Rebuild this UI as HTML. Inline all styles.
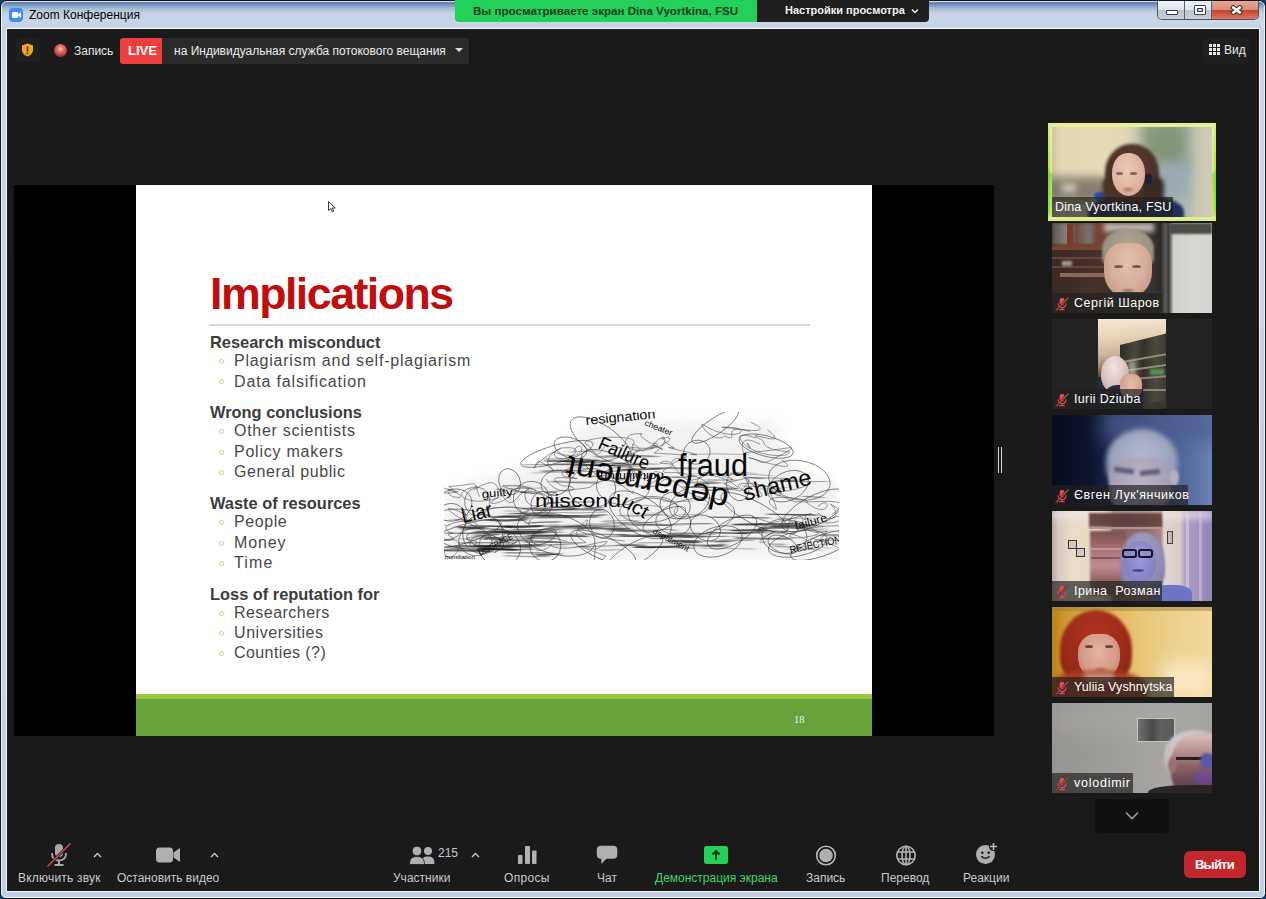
<!DOCTYPE html>
<html><head><meta charset="utf-8">
<style>
*{margin:0;padding:0;box-sizing:border-box}
html,body{width:1266px;height:899px;overflow:hidden;background:#1d3a66;font-family:"Liberation Sans",sans-serif;position:relative}
.a{position:absolute}
.t{position:absolute;white-space:nowrap;line-height:1}
.sl{position:absolute;white-space:nowrap;line-height:1;font-size:16px;color:#484848}
.sh{position:absolute;white-space:nowrap;line-height:1;font-size:16.4px;font-weight:bold;color:#3c3c3c}
.bu{position:absolute;width:5px;height:5px;border:1px solid #c3d48a;border-radius:50%}
.lbl{position:absolute;left:0;bottom:0;height:20px;background:rgba(32,32,32,.68);color:#fff;font-size:12.5px;line-height:20px;white-space:nowrap;padding:0 6px 0 22px}
.mic{position:absolute;left:3px;top:3.5px}
</style></head><body>
<div class="a" style="left:0;top:0;width:1266px;height:899px;border:1px solid #101820;border-radius:7px 7px 6px 6px;background:linear-gradient(180deg,#5a7aaa 0px,#6c8ab6 3px,#a4b8d2 7px,#c4d2e4 12px,#cad6e6 20px,#c6d2e2 28px,#c8d4e4 60px,#c4d0e2 100%)"></div>
<div class="a" style="left:1px;top:1px;width:1264px;height:897px;border:1px solid rgba(255,255,255,.75);border-radius:6px 6px 5px 5px"></div>
<div class="a" style="left:6px;top:28px;width:1px;height:864px;background:#f4f7fb"></div>
<div class="a" style="left:1259px;top:28px;width:1px;height:864px;background:#f4f7fb"></div>
<!-- title -->
<div class="a" style="left:9px;top:8px;width:14px;height:14px;border-radius:4px;background:#3a8ef5"></div>
<div class="a" style="left:12px;top:12px;width:6px;height:6px;background:#fff;border-radius:1px"></div>
<div class="a" style="left:17px;top:12px;width:0;height:0;border-right:4px solid #fff;border-top:3px solid transparent;border-bottom:3px solid transparent"></div>
<div class="t" style="left:29px;top:9px;font-size:12px;color:#000">Zoom Конференция</div>
<!-- window buttons -->
<div class="a" style="left:1157px;top:1px;width:102px;height:19px;border:1px solid #4a5565;border-top:none;border-radius:0 0 5px 5px;overflow:hidden">
 <div class="a" style="left:0;top:0;width:27px;height:18px;background:linear-gradient(180deg,#eef2f6 0,#dfe5ec 50%,#bcc5d0 52%,#c8d0da 100%);border-right:1px solid #5a6470"></div>
 <div class="a" style="left:27px;top:0;width:27px;height:18px;background:linear-gradient(180deg,#eef2f6 0,#dfe5ec 50%,#bcc5d0 52%,#c8d0da 100%);border-right:1px solid #5a6470"></div>
 <div class="a" style="left:54px;top:0;width:47px;height:18px;background:linear-gradient(180deg,#e9a898 0,#dd8b78 48%,#c8452a 52%,#dc7660 100%)"></div>
 <div class="a" style="left:8px;top:9px;width:12px;height:5px;background:#fff;border:1px solid #3a3f46;border-radius:1px"></div>
 <div class="a" style="left:36px;top:4px;width:12px;height:10px;background:#fff;border:1px solid #3a3f46;border-radius:1px"></div>
 <div class="a" style="left:39px;top:7px;width:6px;height:4px;background:#c9d1da;border:1px solid #3a3f46"></div>
 <svg class="a" style="left:72px;top:3.5px" width="13" height="10" viewBox="0 0 13 10"><path d="M3.3 2.6 L9.7 7.4 M9.7 2.6 L3.3 7.4" stroke="#3a3236" stroke-width="4.8" stroke-linecap="square"/><path d="M3.3 2.6 L9.7 7.4 M9.7 2.6 L3.3 7.4" stroke="#fff" stroke-width="2.6" stroke-linecap="square"/></svg>
</div>
<!-- content -->
<div class="a" style="left:7px;top:28px;width:1252px;height:1px;background:#f6f8fb"></div>
<div class="a" style="left:7px;top:29px;width:1252px;height:862px;background:#1a1a1a"></div>
<div class="a" style="left:7px;top:891px;width:1252px;height:1px;background:#f2f5f9"></div>
<!-- green banner -->
<div class="a" style="left:455px;top:0;width:302px;height:22px;background:#22d05a;border-radius:0 0 0 4px"></div>
<div class="t" style="left:473px;top:5px;font-size:11.6px;font-weight:bold;color:#173d22">Вы просматриваете экран Dina Vyortkina, FSU</div>
<div class="a" style="left:757px;top:0;width:172px;height:22px;background:#1e1e1e;border-radius:0 0 4px 0"></div>
<div class="t" style="left:785px;top:5px;font-size:11px;font-weight:bold;color:#f2f2f2">Настройки просмотра</div>
<svg class="a" style="left:911px;top:8px" width="8" height="6" viewBox="0 0 8 6"><path d="M1 1.5 L4 4.5 L7 1.5" stroke="#eee" stroke-width="1.5" fill="none"/></svg>
<!-- top toolbar -->
<div class="a" style="left:16px;top:38px;width:24px;height:24px;background:#1f1f1f;border-radius:4px"></div>
<svg class="a" style="left:21px;top:43px" width="13" height="14" viewBox="0 0 13 14"><path d="M6.5 0.5 L12 2.5 L12 7 C12 10 9.5 12.5 6.5 13.5 C3.5 12.5 1 10 1 7 L1 2.5 Z" fill="#f2a81e"/><rect x="5.7" y="3.5" width="1.6" height="5" fill="#3a2a00"/><rect x="5.7" y="9.6" width="1.6" height="1.6" fill="#3a2a00"/></svg>
<div class="a" style="left:54px;top:44px;width:13px;height:13px;border-radius:50%;background:radial-gradient(circle at 50% 38%,#f6c4bc 0,#e2786c 28%,#c84a40 55%,#8a3430 78%,rgba(40,26,26,.6) 100%)"></div>
<div class="t" style="left:74px;top:45px;font-size:12px;color:#e6e6e6">Запись</div>
<div class="a" style="left:120px;top:38px;width:42px;height:26px;background:#ec4040;border-radius:3px 0 0 3px"></div>
<div class="t" style="left:128px;top:44px;font-size:13px;font-weight:bold;color:#fff">LIVE</div>
<div class="a" style="left:162px;top:38px;width:307px;height:26px;background:#2b2b2b;border-radius:0 3px 3px 0"></div>
<div class="t" style="left:174px;top:45px;font-size:12px;color:#ececec">на Индивидуальная служба потокового вещания</div>
<div class="a" style="left:455px;top:48px;width:0;height:0;border-left:4px solid transparent;border-right:4px solid transparent;border-top:4px solid #ddd"></div>
<!-- view -->
<div class="a" style="left:1203px;top:38px;width:46px;height:26px;background:#1f1f1f;border-radius:5px"></div>
<svg class="a" style="left:1209px;top:44px" width="11" height="11" viewBox="0 0 11 11" fill="#e8e8e8"><rect x="0" y="0" width="3" height="3"/><rect x="4" y="0" width="3" height="3"/><rect x="8" y="0" width="3" height="3"/><rect x="0" y="4" width="3" height="3"/><rect x="4" y="4" width="3" height="3"/><rect x="8" y="4" width="3" height="3"/><rect x="0" y="8" width="3" height="3"/><rect x="4" y="8" width="3" height="3"/><rect x="8" y="8" width="3" height="3"/></svg>
<div class="t" style="left:1224px;top:44px;font-size:12px;color:#eaeaea">Вид</div>
<!-- share area -->
<div class="a" style="left:14px;top:185px;width:980px;height:551px;background:#000"></div>
<div class="a" style="left:136px;top:185px;width:736px;height:551px;background:#fff"></div>
<div class="a" style="left:136px;top:694px;width:736px;height:5px;background:#9ac83c"></div>
<div class="a" style="left:136px;top:699px;width:736px;height:37px;background:#67a33a"></div>
<div class="t" style="left:794px;top:714.5px;font-size:10.5px;color:#f0f5e8;font-family:'Liberation Serif',serif">18</div>
<div class="a" style="left:209px;top:324px;width:601px;height:2px;background:#d6d6d6"></div>
<div class="t" style="left:210px;top:272px;font-size:44.7px;font-weight:bold;color:#c00d0d;letter-spacing:-1.5px">Implications</div>
<div class="sh" style="left:210px;top:333.8px">Research misconduct</div>
<div class="sl" style="left:234px;top:353px;letter-spacing:0.79px">Plagiarism and self-plagiarism</div>
<div class="sl" style="left:234px;top:373.8px;letter-spacing:0.85px">Data falsification</div>
<div class="sh" style="left:210px;top:403.9px">Wrong conclusions</div>
<div class="sl" style="left:234px;top:423.1px;letter-spacing:0.71px">Other scientists</div>
<div class="sl" style="left:234px;top:443.5px;letter-spacing:0.77px">Policy makers</div>
<div class="sl" style="left:234px;top:464.2px;letter-spacing:0.60px">General public</div>
<div class="sh" style="left:210px;top:495px">Waste of resources</div>
<div class="sl" style="left:234px;top:514px;letter-spacing:0.57px">People</div>
<div class="sl" style="left:234px;top:534.7px;letter-spacing:0.90px">Money</div>
<div class="sl" style="left:234px;top:555.3px;letter-spacing:1.12px">Time</div>
<div class="sh" style="left:210px;top:585.9px">Loss of reputation for</div>
<div class="sl" style="left:234px;top:604.9px;letter-spacing:0.46px">Researchers</div>
<div class="sl" style="left:234px;top:625.2px;letter-spacing:0.58px">Universities</div>
<div class="sl" style="left:234px;top:645.4px;letter-spacing:0.42px">Counties (?)</div>
<div class="bu" style="left:219px;top:358.5px"></div>
<div class="bu" style="left:219px;top:379.3px"></div>
<div class="bu" style="left:219px;top:429.1px"></div>
<div class="bu" style="left:219px;top:449.5px"></div>
<div class="bu" style="left:219px;top:470.2px"></div>
<div class="bu" style="left:219px;top:520px"></div>
<div class="bu" style="left:219px;top:540.7px"></div>
<div class="bu" style="left:219px;top:561.3px"></div>
<div class="bu" style="left:219px;top:610.9px"></div>
<div class="bu" style="left:219px;top:631.2px"></div>
<div class="bu" style="left:219px;top:651.4px"></div>
<!-- cursor -->
<svg class="a" style="left:328px;top:201px" width="8" height="12" viewBox="0 0 8 12"><path d="M0.5 0.5 L0.5 9.5 L2.8 7.5 L4.3 11 L5.6 10.4 L4.2 7 L7.2 7 Z" fill="#fff" stroke="#222" stroke-width="0.9"/></svg>
<!-- divider handle -->
<div class="a" style="left:998px;top:447px;width:1px;height:26px;background:#d4d4d4"></div>
<div class="a" style="left:1001px;top:447px;width:1px;height:26px;background:#d4d4d4"></div>
<svg class="a" style="left:444px;top:412px" width="395" height="148" viewBox="0 0 395 148">
<defs><filter id="bl" x="-10%" y="-50%" width="120%" height="200%"><feGaussianBlur stdDeviation="2.5 0.7"/></filter><filter id="bl2" x="-10%" y="-10%" width="120%" height="120%"><feGaussianBlur stdDeviation="5"/></filter></defs>
<path d="M0 148 L0 78 L26 70 L76 58 L106 46 L126 26 L146 10 L330 9 L345 41 L356 58 L386 68 L395 72 L395 148 Z" fill="#e2e2e2" filter="url(#bl2)" opacity=".45"/>
<g fill="none" stroke="#1a1a1a" stroke-linecap="round" filter="url(#bl)"><path d="M61.7 121.6 q19.0 0.3 37.9 -1.0" stroke-width="1.9" stroke-opacity="0.71"/><path d="M46.2 105.1 q19.8 -1.1 39.7 0.6" stroke-width="1.2" stroke-opacity="0.55"/><path d="M68.8 117.4 q23.6 1.3 47.2 0.4" stroke-width="1.9" stroke-opacity="0.40"/><path d="M50.6 120.4 q13.0 -0.5 26.0 1.3" stroke-width="1.5" stroke-opacity="0.65"/><path d="M30.3 123.1 q10.3 1.2 20.6 0.1" stroke-width="2.2" stroke-opacity="0.37"/><path d="M14.4 115.1 q13.4 1.0 26.9 0.3" stroke-width="2.1" stroke-opacity="0.80"/><path d="M82.2 125.8 q14.0 0.2 28.0 1.0" stroke-width="2.0" stroke-opacity="0.42"/><path d="M64.2 124.9 q9.2 1.5 18.4 1.3" stroke-width="0.7" stroke-opacity="0.39"/><path d="M24.8 113.7 q22.6 0.3 45.2 0.9" stroke-width="1.8" stroke-opacity="0.49"/><path d="M59.9 118.4 q18.0 0.2 36.1 -1.0" stroke-width="0.8" stroke-opacity="0.49"/><path d="M18.8 117.4 q20.3 -1.4 40.6 0.5" stroke-width="1.1" stroke-opacity="0.62"/><path d="M81.0 130.0 q21.0 0.4 42.0 0.6" stroke-width="1.4" stroke-opacity="0.51"/><path d="M43.8 108.0 q18.4 1.1 36.9 -0.3" stroke-width="2.2" stroke-opacity="0.72"/><path d="M0.2 121.1 q27.9 -0.2 55.7 1.2" stroke-width="1.4" stroke-opacity="0.56"/><path d="M32.3 119.8 q23.8 0.3 47.7 0.8" stroke-width="2.0" stroke-opacity="0.67"/><path d="M38.7 125.6 q9.1 0.0 18.1 -0.3" stroke-width="0.8" stroke-opacity="0.52"/><path d="M80.1 121.0 q19.3 -0.3 38.7 -0.8" stroke-width="1.0" stroke-opacity="0.45"/><path d="M84.8 123.5 q29.2 -0.2 58.5 0.9" stroke-width="1.7" stroke-opacity="0.73"/><path d="M47.6 127.8 q20.3 0.9 40.5 -1.1" stroke-width="2.0" stroke-opacity="0.35"/><path d="M-12.0 114.6 q7.5 -0.5 15.0 -1.3" stroke-width="1.0" stroke-opacity="0.45"/><path d="M82.8 111.2 q16.4 -1.4 32.9 -1.4" stroke-width="1.2" stroke-opacity="0.59"/><path d="M59.9 114.9 q18.7 -0.1 37.4 -0.9" stroke-width="2.1" stroke-opacity="0.79"/><path d="M15.2 131.0 q27.7 -0.4 55.4 -0.1" stroke-width="0.9" stroke-opacity="0.72"/><path d="M56.3 128.9 q29.9 -0.9 59.8 1.1" stroke-width="0.9" stroke-opacity="0.62"/><path d="M48.3 118.9 q23.8 1.1 47.7 0.6" stroke-width="1.1" stroke-opacity="0.75"/><path d="M59.0 124.9 q28.6 -0.8 57.2 -0.6" stroke-width="1.3" stroke-opacity="0.34"/><path d="M44.0 114.2 q11.6 0.9 23.1 -0.4" stroke-width="1.0" stroke-opacity="0.63"/><path d="M9.8 107.4 q20.8 1.3 41.5 0.5" stroke-width="1.0" stroke-opacity="0.45"/><path d="M44.0 126.5 q9.5 0.1 19.0 0.1" stroke-width="2.2" stroke-opacity="0.52"/><path d="M81.2 120.3 q13.9 -1.2 27.8 -0.6" stroke-width="1.0" stroke-opacity="0.70"/><path d="M136.9 47.5 q13.8 1.2 27.6 1.5" stroke-width="1.5" stroke-opacity="0.39"/><path d="M151.7 53.4 q24.4 -0.0 48.8 -1.0" stroke-width="1.2" stroke-opacity="0.76"/><path d="M102.0 49.0 q15.6 0.1 31.2 0.0" stroke-width="1.7" stroke-opacity="0.69"/><path d="M151.3 44.5 q19.2 0.8 38.4 -1.0" stroke-width="2.1" stroke-opacity="0.39"/><path d="M118.9 49.2 q17.4 0.9 34.8 -0.8" stroke-width="1.8" stroke-opacity="0.69"/><path d="M112.5 52.3 q20.6 0.3 41.1 0.6" stroke-width="1.4" stroke-opacity="0.32"/><path d="M134.0 52.9 q18.7 -0.7 37.3 0.9" stroke-width="1.3" stroke-opacity="0.52"/><path d="M176.7 57.8 q20.3 -0.8 40.6 -1.1" stroke-width="1.5" stroke-opacity="0.70"/><path d="M132.8 53.6 q14.6 -0.7 29.1 0.3" stroke-width="1.6" stroke-opacity="0.56"/><path d="M176.4 57.9 q11.4 0.6 22.7 1.0" stroke-width="1.0" stroke-opacity="0.38"/><path d="M135.2 49.9 q16.7 1.4 33.5 -1.4" stroke-width="1.2" stroke-opacity="0.41"/><path d="M79.8 52.7 q29.7 0.7 59.4 -1.4" stroke-width="0.8" stroke-opacity="0.53"/><path d="M142.3 64.6 q10.7 -0.2 21.4 -1.3" stroke-width="1.2" stroke-opacity="0.45"/><path d="M203.5 56.3 q24.7 -0.7 49.3 0.2" stroke-width="1.8" stroke-opacity="0.41"/><path d="M122.9 58.7 q28.5 1.4 57.0 0.3" stroke-width="1.2" stroke-opacity="0.47"/><path d="M151.5 53.5 q22.1 0.6 44.2 1.1" stroke-width="0.7" stroke-opacity="0.47"/><path d="M97.8 59.2 q16.1 -0.5 32.2 -0.9" stroke-width="1.9" stroke-opacity="0.41"/><path d="M124.2 50.9 q12.1 -0.6 24.2 -0.2" stroke-width="0.9" stroke-opacity="0.53"/><path d="M159.2 51.6 q26.9 -1.3 53.8 0.6" stroke-width="0.9" stroke-opacity="0.49"/><path d="M129.6 55.6 q7.9 -0.3 15.8 1.3" stroke-width="0.9" stroke-opacity="0.43"/><path d="M217.2 124.3 q15.6 -0.4 31.2 0.8" stroke-width="0.8" stroke-opacity="0.77"/><path d="M216.8 117.7 q8.0 -1.3 15.9 1.1" stroke-width="1.1" stroke-opacity="0.49"/><path d="M188.0 135.3 q19.2 -0.8 38.4 -1.4" stroke-width="0.7" stroke-opacity="0.50"/><path d="M264.7 133.2 q8.2 0.1 16.4 -1.1" stroke-width="1.1" stroke-opacity="0.51"/><path d="M207.4 124.4 q23.8 -0.9 47.6 -0.7" stroke-width="1.7" stroke-opacity="0.37"/><path d="M213.9 123.2 q16.2 -0.6 32.4 -0.5" stroke-width="2.0" stroke-opacity="0.41"/><path d="M234.5 129.4 q8.1 0.9 16.1 1.4" stroke-width="1.6" stroke-opacity="0.58"/><path d="M193.2 134.8 q28.2 0.5 56.4 1.4" stroke-width="0.9" stroke-opacity="0.64"/><path d="M239.1 125.4 q21.7 -0.3 43.5 -1.3" stroke-width="0.7" stroke-opacity="0.51"/><path d="M193.5 130.9 q18.7 -0.3 37.4 -0.1" stroke-width="1.0" stroke-opacity="0.38"/><path d="M258.2 134.2 q12.9 -0.2 25.8 -1.0" stroke-width="0.7" stroke-opacity="0.47"/><path d="M163.4 124.3 q19.9 -0.3 39.9 -0.4" stroke-width="1.7" stroke-opacity="0.31"/><path d="M270.7 129.9 q8.7 -0.1 17.5 -0.5" stroke-width="1.4" stroke-opacity="0.59"/><path d="M224.5 129.0 q15.3 -0.7 30.6 0.5" stroke-width="2.0" stroke-opacity="0.58"/><path d="M237.2 133.0 q21.3 0.2 42.7 1.3" stroke-width="2.1" stroke-opacity="0.48"/><path d="M226.5 121.3 q21.5 -0.7 42.9 1.0" stroke-width="1.3" stroke-opacity="0.51"/><path d="M242.0 124.8 q28.0 0.0 55.9 -0.6" stroke-width="0.7" stroke-opacity="0.37"/><path d="M155.4 138.1 q10.9 0.5 21.7 -0.8" stroke-width="0.9" stroke-opacity="0.41"/><path d="M276.3 128.0 q16.4 0.5 32.7 0.1" stroke-width="1.0" stroke-opacity="0.55"/><path d="M175.6 123.7 q26.2 -0.5 52.4 1.2" stroke-width="2.2" stroke-opacity="0.47"/><path d="M191.0 135.0 q23.1 1.0 46.3 -1.0" stroke-width="1.7" stroke-opacity="0.78"/><path d="M184.6 124.1 q20.2 0.7 40.4 0.1" stroke-width="1.2" stroke-opacity="0.44"/><path d="M227.8 131.6 q14.8 -1.1 29.6 -1.3" stroke-width="0.9" stroke-opacity="0.56"/><path d="M234.4 128.9 q23.4 0.8 46.7 -0.1" stroke-width="0.8" stroke-opacity="0.53"/><path d="M256.9 136.2 q27.1 0.0 54.1 0.9" stroke-width="0.7" stroke-opacity="0.43"/><path d="M174.9 132.8 q13.2 -0.5 26.3 0.8" stroke-width="1.7" stroke-opacity="0.46"/><path d="M263.1 120.5 q20.3 0.4 40.5 1.0" stroke-width="1.3" stroke-opacity="0.65"/><path d="M230.9 125.6 q16.0 -0.9 32.0 -1.5" stroke-width="1.7" stroke-opacity="0.42"/><path d="M124.8 122.2 q29.3 -0.2 58.7 0.4" stroke-width="0.8" stroke-opacity="0.64"/><path d="M132.4 134.8 q29.7 -1.1 59.5 -1.4" stroke-width="0.7" stroke-opacity="0.66"/><path d="M290.3 121.5 q29.9 -1.4 59.7 0.1" stroke-width="0.8" stroke-opacity="0.47"/><path d="M289.6 112.6 q14.5 -0.6 28.9 -0.3" stroke-width="1.9" stroke-opacity="0.72"/><path d="M266.5 105.1 q29.6 0.1 59.1 0.9" stroke-width="1.2" stroke-opacity="0.65"/><path d="M330.2 115.0 q9.9 -0.0 19.8 -1.1" stroke-width="2.1" stroke-opacity="0.43"/><path d="M307.4 113.1 q20.2 -0.7 40.5 -0.8" stroke-width="0.8" stroke-opacity="0.61"/><path d="M291.1 112.6 q13.3 1.2 26.7 -0.6" stroke-width="0.7" stroke-opacity="0.33"/><path d="M326.7 113.8 q18.4 1.1 36.8 -0.0" stroke-width="2.2" stroke-opacity="0.40"/><path d="M271.5 117.6 q16.4 0.5 32.8 0.4" stroke-width="0.7" stroke-opacity="0.58"/><path d="M292.2 126.0 q27.0 1.0 53.9 0.7" stroke-width="2.2" stroke-opacity="0.52"/><path d="M321.5 113.2 q11.3 -0.4 22.6 0.8" stroke-width="0.8" stroke-opacity="0.34"/><path d="M310.3 118.7 q7.7 -1.5 15.5 0.1" stroke-width="0.9" stroke-opacity="0.78"/><path d="M323.6 102.1 q24.0 1.0 48.1 0.8" stroke-width="1.2" stroke-opacity="0.70"/><path d="M313.5 111.8 q28.9 -0.7 57.8 1.2" stroke-width="1.2" stroke-opacity="0.65"/><path d="M352.4 113.2 q12.6 0.5 25.2 0.9" stroke-width="1.2" stroke-opacity="0.48"/><path d="M289.1 118.4 q15.5 -0.5 30.9 -1.2" stroke-width="1.0" stroke-opacity="0.75"/><path d="M295.2 120.5 q12.3 0.5 24.5 -1.0" stroke-width="1.8" stroke-opacity="0.57"/><path d="M326.4 114.1 q15.4 0.0 30.8 -0.3" stroke-width="1.3" stroke-opacity="0.30"/><path d="M286.5 118.7 q28.9 -0.5 57.9 0.8" stroke-width="0.9" stroke-opacity="0.74"/><path d="M374.9 123.2 q17.2 -0.3 34.4 0.6" stroke-width="2.1" stroke-opacity="0.41"/><path d="M316.7 116.3 q22.7 -0.9 45.5 -0.4" stroke-width="2.1" stroke-opacity="0.46"/><path d="M31.8 137.9 q21.8 -0.9 43.6 0.3" stroke-width="1.2" stroke-opacity="0.62"/><path d="M54.3 133.4 q21.6 -1.2 43.3 1.0" stroke-width="1.4" stroke-opacity="0.58"/><path d="M7.8 134.3 q22.5 -0.8 44.9 0.3" stroke-width="1.3" stroke-opacity="0.49"/><path d="M5.9 136.1 q8.2 0.3 16.4 0.3" stroke-width="1.6" stroke-opacity="0.52"/><path d="M34.5 137.1 q18.0 -0.6 36.1 0.7" stroke-width="2.2" stroke-opacity="0.67"/><path d="M37.3 137.8 q27.0 -0.0 54.0 -0.8" stroke-width="0.8" stroke-opacity="0.80"/><path d="M30.1 133.6 q28.6 0.0 57.2 1.5" stroke-width="1.9" stroke-opacity="0.70"/><path d="M61.0 140.9 q23.5 -0.1 47.0 0.1" stroke-width="1.0" stroke-opacity="0.70"/><path d="M36.7 136.2 q13.8 0.2 27.6 0.9" stroke-width="1.6" stroke-opacity="0.34"/><path d="M-3.3 138.2 q25.5 0.1 51.0 1.2" stroke-width="2.0" stroke-opacity="0.69"/><path d="M28.3 136.0 q15.7 -0.5 31.5 1.1" stroke-width="0.8" stroke-opacity="0.32"/><path d="M34.4 136.4 q11.6 0.4 23.2 1.2" stroke-width="1.2" stroke-opacity="0.72"/><path d="M92.0 142.7 q12.2 0.7 24.3 -0.9" stroke-width="1.6" stroke-opacity="0.74"/><path d="M19.7 134.7 q7.8 0.4 15.7 -0.7" stroke-width="1.1" stroke-opacity="0.46"/><path d="M-1.1 134.7 q11.6 -0.1 23.1 -1.1" stroke-width="0.8" stroke-opacity="0.65"/><path d="M61.4 143.7 q21.2 1.5 42.5 0.6" stroke-width="1.2" stroke-opacity="0.40"/><path d="M23.6 134.6 q14.5 0.4 29.0 -0.2" stroke-width="1.3" stroke-opacity="0.37"/><path d="M32.7 134.7 q17.8 -0.5 35.6 0.6" stroke-width="1.4" stroke-opacity="0.77"/><path d="M164.1 118.3 q13.9 1.1 27.8 0.5" stroke-width="2.0" stroke-opacity="0.44"/><path d="M105.1 115.1 q16.2 -0.2 32.4 -1.3" stroke-width="1.8" stroke-opacity="0.60"/><path d="M140.5 113.9 q17.4 0.6 34.8 0.5" stroke-width="2.1" stroke-opacity="0.45"/><path d="M165.3 116.9 q10.5 -0.2 20.9 -0.5" stroke-width="2.0" stroke-opacity="0.43"/><path d="M174.3 103.5 q20.8 1.2 41.6 -1.2" stroke-width="1.5" stroke-opacity="0.35"/><path d="M136.0 115.5 q23.8 1.2 47.5 1.3" stroke-width="1.7" stroke-opacity="0.47"/><path d="M190.6 113.0 q18.1 -0.6 36.1 0.5" stroke-width="1.2" stroke-opacity="0.53"/><path d="M95.3 104.2 q29.5 1.0 58.9 0.4" stroke-width="2.2" stroke-opacity="0.50"/><path d="M140.7 96.1 q9.0 0.5 18.0 -0.8" stroke-width="1.3" stroke-opacity="0.50"/><path d="M175.6 111.8 q15.8 0.7 31.6 -1.2" stroke-width="0.8" stroke-opacity="0.50"/><path d="M170.8 118.0 q21.5 0.9 43.0 0.7" stroke-width="1.8" stroke-opacity="0.43"/><path d="M158.9 109.6 q18.0 1.3 36.1 1.2" stroke-width="0.6" stroke-opacity="0.73"/><path d="M177.5 112.7 q19.6 0.9 39.1 -0.6" stroke-width="1.5" stroke-opacity="0.36"/><path d="M142.4 111.9 q20.3 0.0 40.6 -0.6" stroke-width="0.8" stroke-opacity="0.34"/><path d="M161.3 108.4 q16.8 -0.1 33.6 0.2" stroke-width="0.7" stroke-opacity="0.41"/><path d="M119.9 114.4 q9.8 1.4 19.7 0.1" stroke-width="2.0" stroke-opacity="0.38"/><path d="M55.6 104.6 q26.9 -1.5 53.9 -1.0" stroke-width="2.1" stroke-opacity="0.51"/><path d="M102.8 91.1 q23.5 -1.4 47.1 -1.2" stroke-width="0.9" stroke-opacity="0.57"/><path d="M68.4 114.8 q22.0 -0.3 43.9 -1.3" stroke-width="2.0" stroke-opacity="0.32"/><path d="M81.0 102.9 q28.2 0.5 56.3 1.2" stroke-width="1.1" stroke-opacity="0.54"/><path d="M120.6 97.4 q18.8 -0.6 37.5 0.7" stroke-width="2.0" stroke-opacity="0.50"/><path d="M91.6 105.7 q17.2 -0.2 34.3 -0.1" stroke-width="1.4" stroke-opacity="0.48"/><path d="M144.5 103.5 q8.9 -0.3 17.8 -0.8" stroke-width="1.4" stroke-opacity="0.57"/><path d="M114.2 103.4 q14.6 0.7 29.1 -0.0" stroke-width="1.4" stroke-opacity="0.42"/><path d="M105.2 100.3 q29.2 1.4 58.5 -0.4" stroke-width="0.6" stroke-opacity="0.60"/><path d="M76.9 96.7 q14.3 -0.6 28.6 -0.0" stroke-width="1.6" stroke-opacity="0.59"/><path d="M61.3 99.0 q8.7 -0.7 17.4 0.9" stroke-width="0.7" stroke-opacity="0.43"/><path d="M51.0 105.4 q16.6 -1.2 33.1 1.5" stroke-width="1.1" stroke-opacity="0.64"/><path d="M105.9 95.3 q14.6 0.4 29.3 -1.3" stroke-width="1.9" stroke-opacity="0.69"/><path d="M89.1 98.1 q21.6 0.4 43.1 -1.4" stroke-width="1.5" stroke-opacity="0.76"/><path d="M306.2 66.0 q20.5 -0.2 41.1 0.5" stroke-width="0.6" stroke-opacity="0.67"/><path d="M334.0 68.6 q9.2 0.8 18.4 -0.4" stroke-width="1.9" stroke-opacity="0.52"/><path d="M255.5 72.1 q10.2 -1.3 20.3 -1.2" stroke-width="1.1" stroke-opacity="0.67"/><path d="M288.1 62.3 q19.8 -0.6 39.7 1.4" stroke-width="0.8" stroke-opacity="0.36"/><path d="M227.3 65.0 q12.3 1.0 24.5 -1.1" stroke-width="1.3" stroke-opacity="0.57"/><path d="M300.8 65.2 q8.2 0.5 16.4 1.3" stroke-width="1.3" stroke-opacity="0.49"/><path d="M237.1 70.4 q16.2 0.7 32.5 -1.0" stroke-width="1.8" stroke-opacity="0.35"/><path d="M260.9 67.9 q15.3 0.3 30.6 0.1" stroke-width="0.9" stroke-opacity="0.47"/><path d="M239.6 75.1 q26.5 -0.1 52.9 1.4" stroke-width="1.2" stroke-opacity="0.59"/><path d="M259.8 78.2 q12.8 0.2 25.5 -0.7" stroke-width="1.0" stroke-opacity="0.67"/><path d="M15.0 126.8 q16.0 0.6 32.0 -0.2" stroke-width="1.1" stroke-opacity="0.37"/><path d="M370.5 132.4 q17.8 -0.0 35.5 -0.8" stroke-width="1.2" stroke-opacity="0.23"/><path d="M109.6 122.3 q8.3 0.6 16.6 0.2" stroke-width="1.0" stroke-opacity="0.30"/><path d="M49.1 134.4 q24.7 0.9 49.4 -1.2" stroke-width="1.2" stroke-opacity="0.27"/><path d="M67.7 101.4 q21.2 -1.1 42.4 0.8" stroke-width="1.0" stroke-opacity="0.47"/><path d="M350.3 116.5 q15.7 1.4 31.4 0.7" stroke-width="0.8" stroke-opacity="0.46"/><path d="M273.5 62.3 q13.1 -1.4 26.2 0.1" stroke-width="0.7" stroke-opacity="0.29"/><path d="M88.6 61.0 q18.4 -0.7 36.8 -0.6" stroke-width="0.7" stroke-opacity="0.35"/><path d="M330.8 69.1 q26.8 1.1 53.7 0.3" stroke-width="1.0" stroke-opacity="0.42"/><path d="M198.5 103.0 q28.2 0.8 56.4 -0.7" stroke-width="0.5" stroke-opacity="0.48"/><path d="M131.4 116.1 q12.8 -0.1 25.5 -0.4" stroke-width="1.2" stroke-opacity="0.48"/><path d="M187.2 93.3 q15.3 -0.8 30.7 1.3" stroke-width="0.6" stroke-opacity="0.48"/><path d="M246.3 42.4 q27.8 -1.2 55.6 0.2" stroke-width="0.6" stroke-opacity="0.50"/><path d="M110.6 124.8 q8.9 0.5 17.8 -1.3" stroke-width="0.5" stroke-opacity="0.37"/><path d="M373.3 118.9 q26.7 0.9 53.5 0.1" stroke-width="0.6" stroke-opacity="0.36"/><path d="M62.0 101.8 q15.5 -0.0 30.9 -0.9" stroke-width="1.1" stroke-opacity="0.33"/><path d="M179.5 43.1 q18.5 0.2 36.9 1.4" stroke-width="1.0" stroke-opacity="0.24"/><path d="M107.1 69.6 q23.3 1.3 46.6 1.4" stroke-width="1.4" stroke-opacity="0.48"/><path d="M324.9 132.1 q8.0 -0.0 15.9 0.3" stroke-width="1.1" stroke-opacity="0.38"/><path d="M229.1 131.1 q9.4 0.1 18.9 1.4" stroke-width="0.5" stroke-opacity="0.23"/><path d="M328.9 134.4 q8.0 -1.4 16.1 1.0" stroke-width="1.1" stroke-opacity="0.36"/><path d="M216.2 113.0 q25.7 -1.5 51.4 -1.3" stroke-width="1.2" stroke-opacity="0.49"/><path d="M315.0 77.0 q15.0 -0.5 30.1 -1.5" stroke-width="1.2" stroke-opacity="0.28"/><path d="M218.4 89.2 q15.0 0.5 30.1 -0.1" stroke-width="0.7" stroke-opacity="0.46"/><path d="M58.5 74.2 q13.2 -0.1 26.4 0.9" stroke-width="0.8" stroke-opacity="0.27"/><path d="M245.2 61.8 q19.3 -0.7 38.5 1.1" stroke-width="0.7" stroke-opacity="0.27"/><path d="M107.6 68.9 q23.8 0.5 47.7 0.9" stroke-width="1.0" stroke-opacity="0.22"/><path d="M287.8 60.2 q12.4 -0.3 24.8 1.5" stroke-width="0.8" stroke-opacity="0.31"/><path d="M345.3 137.3 q16.2 -1.1 32.4 0.9" stroke-width="1.2" stroke-opacity="0.30"/><path d="M298.3 74.1 q14.0 0.3 27.9 0.7" stroke-width="0.9" stroke-opacity="0.45"/><path d="M-4.6 108.6 q16.1 -1.3 32.1 1.2" stroke-width="0.6" stroke-opacity="0.26"/><path d="M332.5 134.9 q28.5 -0.5 56.9 1.3" stroke-width="0.6" stroke-opacity="0.41"/><path d="M358.8 84.4 q10.6 0.5 21.1 1.1" stroke-width="1.2" stroke-opacity="0.48"/><path d="M167.0 73.3 q10.2 -0.7 20.4 1.3" stroke-width="0.6" stroke-opacity="0.26"/><path d="M125.5 40.1 q14.4 -1.0 28.8 -1.1" stroke-width="1.0" stroke-opacity="0.36"/><path d="M211.4 113.5 q19.4 1.3 38.7 -1.3" stroke-width="0.7" stroke-opacity="0.22"/><path d="M110.7 113.3 q28.3 0.0 56.6 -1.0" stroke-width="0.8" stroke-opacity="0.37"/><path d="M104.8 116.7 q29.4 -0.1 58.8 0.3" stroke-width="1.3" stroke-opacity="0.34"/><path d="M64.4 133.7 q29.5 -1.4 59.0 0.8" stroke-width="0.9" stroke-opacity="0.22"/><path d="M53.5 77.3 q24.1 -0.9 48.1 -1.4" stroke-width="0.7" stroke-opacity="0.44"/><path d="M184.7 102.2 q18.0 -1.0 35.9 -1.5" stroke-width="0.8" stroke-opacity="0.21"/><path d="M91.6 103.1 q15.8 -0.1 31.6 0.4" stroke-width="0.8" stroke-opacity="0.31"/><path d="M334.7 106.2 q16.9 0.1 33.8 -0.1" stroke-width="0.8" stroke-opacity="0.47"/><path d="M81.0 132.6 q26.7 1.1 53.4 -1.0" stroke-width="1.0" stroke-opacity="0.50"/><path d="M102.6 53.0 q23.8 -0.8 47.6 0.3" stroke-width="0.6" stroke-opacity="0.48"/><path d="M100.8 47.0 q23.0 -0.5 45.9 0.2" stroke-width="0.9" stroke-opacity="0.48"/><path d="M190.5 74.0 q7.5 -0.0 15.1 -0.7" stroke-width="1.0" stroke-opacity="0.39"/><path d="M170.3 44.3 q18.7 -0.1 37.4 0.4" stroke-width="1.4" stroke-opacity="0.28"/><path d="M162.7 43.7 q25.5 -0.8 51.0 1.0" stroke-width="1.2" stroke-opacity="0.28"/><path d="M342.1 102.3 q17.1 0.2 34.2 1.3" stroke-width="0.9" stroke-opacity="0.34"/></g>
<g fill="none" stroke="#333" stroke-width="0.65" stroke-opacity="0.85"><ellipse cx="179.2" cy="73.8" rx="26.8" ry="18.9" transform="rotate(1 179.2 73.8)"/><ellipse cx="231.1" cy="93.5" rx="15.5" ry="13.2" transform="rotate(21 231.1 93.5)"/><ellipse cx="41.2" cy="128.9" rx="19.1" ry="7.3" transform="rotate(14 41.2 128.9)"/><ellipse cx="21.1" cy="117.2" rx="39.5" ry="19.5" transform="rotate(8 21.1 117.2)"/><ellipse cx="65.6" cy="69.7" rx="10.5" ry="13.4" transform="rotate(-22 65.6 69.7)"/><ellipse cx="98.1" cy="91.6" rx="10.9" ry="12.5" transform="rotate(24 98.1 91.6)"/><ellipse cx="204.9" cy="97.6" rx="29.2" ry="13.0" transform="rotate(-3 204.9 97.6)"/><ellipse cx="112.1" cy="122.3" rx="39.9" ry="19.9" transform="rotate(15 112.1 122.3)"/><ellipse cx="126.4" cy="35.8" rx="16.9" ry="10.0" transform="rotate(19 126.4 35.8)"/><ellipse cx="159.2" cy="135.8" rx="35.4" ry="11.4" transform="rotate(24 159.2 135.8)"/><ellipse cx="5.2" cy="109.5" rx="16.3" ry="18.7" transform="rotate(34 5.2 109.5)"/><ellipse cx="158.0" cy="111.8" rx="12.2" ry="14.8" transform="rotate(-16 158.0 111.8)"/><ellipse cx="38.6" cy="121.9" rx="20.0" ry="19.5" transform="rotate(-27 38.6 121.9)"/><ellipse cx="99.9" cy="124.4" rx="13.0" ry="6.8" transform="rotate(-23 99.9 124.4)"/><ellipse cx="220.3" cy="107.3" rx="23.4" ry="8.7" transform="rotate(-26 220.3 107.3)"/><ellipse cx="252.8" cy="40.2" rx="13.5" ry="11.9" transform="rotate(-16 252.8 40.2)"/><ellipse cx="378.8" cy="133.3" rx="34.1" ry="10.3" transform="rotate(-20 378.8 133.3)"/><ellipse cx="156.8" cy="28.3" rx="35.6" ry="15.0" transform="rotate(34 156.8 28.3)"/><ellipse cx="87.1" cy="86.3" rx="17.7" ry="16.8" transform="rotate(-14 87.1 86.3)"/><ellipse cx="33.3" cy="89.6" rx="12.7" ry="14.2" transform="rotate(7 33.3 89.6)"/><ellipse cx="148.1" cy="76.0" rx="23.6" ry="19.4" transform="rotate(5 148.1 76.0)"/><ellipse cx="338.6" cy="132.6" rx="15.5" ry="8.2" transform="rotate(22 338.6 132.6)"/><ellipse cx="101.1" cy="133.2" rx="15.7" ry="16.4" transform="rotate(-21 101.1 133.2)"/><ellipse cx="370.8" cy="98.3" rx="36.5" ry="14.4" transform="rotate(-28 370.8 98.3)"/><ellipse cx="19.9" cy="122.0" rx="38.9" ry="9.3" transform="rotate(-17 19.9 122.0)"/><ellipse cx="322.1" cy="34.1" rx="27.9" ry="10.1" transform="rotate(15 322.1 34.1)"/><ellipse cx="31.5" cy="130.0" rx="16.9" ry="13.8" transform="rotate(8 31.5 130.0)"/><ellipse cx="112.9" cy="41.9" rx="37.5" ry="8.9" transform="rotate(-16 112.9 41.9)"/><ellipse cx="176.6" cy="59.4" rx="11.8" ry="8.5" transform="rotate(5 176.6 59.4)"/><ellipse cx="55.7" cy="135.6" rx="20.9" ry="18.5" transform="rotate(11 55.7 135.6)"/><ellipse cx="271.1" cy="14.4" rx="27.5" ry="8.0" transform="rotate(-34 271.1 14.4)"/><ellipse cx="355.4" cy="68.2" rx="31.0" ry="19.5" transform="rotate(10 355.4 68.2)"/><ellipse cx="190.7" cy="141.6" rx="31.9" ry="10.5" transform="rotate(-30 190.7 141.6)"/><ellipse cx="215.2" cy="105.7" rx="32.1" ry="18.6" transform="rotate(14 215.2 105.7)"/><ellipse cx="310.4" cy="100.6" rx="37.5" ry="10.9" transform="rotate(28 310.4 100.6)"/><ellipse cx="340.4" cy="124.2" rx="22.5" ry="17.1" transform="rotate(5 340.4 124.2)"/><ellipse cx="245.6" cy="90.7" rx="21.5" ry="14.2" transform="rotate(-29 245.6 90.7)"/><ellipse cx="251.2" cy="104.7" rx="39.8" ry="18.3" transform="rotate(-8 251.2 104.7)"/><ellipse cx="288.0" cy="120.1" rx="27.4" ry="12.2" transform="rotate(-29 288.0 120.1)"/><ellipse cx="293.8" cy="74.7" rx="10.9" ry="14.4" transform="rotate(-19 293.8 74.7)"/><ellipse cx="273.9" cy="129.4" rx="24.9" ry="14.6" transform="rotate(-17 273.9 129.4)"/><ellipse cx="9.4" cy="93.1" rx="19.0" ry="15.5" transform="rotate(-23 9.4 93.1)"/><ellipse cx="353.7" cy="131.8" rx="29.8" ry="12.2" transform="rotate(-12 353.7 131.8)"/><ellipse cx="261.4" cy="116.0" rx="16.0" ry="12.0" transform="rotate(29 261.4 116.0)"/><ellipse cx="343.9" cy="74.2" rx="21.5" ry="14.2" transform="rotate(-25 343.9 74.2)"/><ellipse cx="196.1" cy="102.8" rx="35.1" ry="17.9" transform="rotate(32 196.1 102.8)"/><ellipse cx="111.6" cy="70.8" rx="15.1" ry="12.3" transform="rotate(-20 111.6 70.8)"/><ellipse cx="164.4" cy="54.0" rx="28.8" ry="12.9" transform="rotate(24 164.4 54.0)"/></g>
<g fill="none" stroke="#3a3a3a" stroke-width="0.65" stroke-opacity="0.8"><path d="M387.9 102.4 C417.7 82.2 366.3 92.4 349.6 89.3 C311.2 73.3 328.8 76.5 332.4 97.4 C303.7 77.5 372.4 87.7 362.1 90.1 C386.7 110.3 388.6 81.2 373.8 94.4"/><path d="M187.7 33.6 C204.8 19.5 125.4 26.0 143.7 32.8 C152.8 44.1 152.9 46.2 161.4 33.4 C196.0 43.2 168.4 19.8 198.0 21.8 C188.1 24.8 239.6 46.4 209.3 33.3"/><path d="M373.0 100.5 C390.7 114.5 397.9 101.8 386.6 92.2 C425.0 113.2 363.8 116.2 360.8 103.4 C389.3 96.7 311.3 112.3 344.6 114.9 C343.6 94.1 373.9 103.2 349.2 122.4"/><path d="M315.9 32.2 C287.2 16.8 302.4 50.1 301.1 40.3 C336.8 40.0 367.6 27.4 331.7 45.6 C314.9 55.7 317.7 47.3 306.6 46.3 C291.6 41.1 365.2 65.6 337.5 48.0"/><path d="M82.3 129.9 C88.1 116.8 127.3 130.8 124.4 130.6 C162.0 131.3 125.9 130.6 133.9 117.4 C149.2 98.3 142.6 113.4 139.5 117.1 C121.1 116.0 150.8 126.1 180.7 129.0"/><path d="M322.2 129.7 C297.5 134.9 354.1 108.3 320.1 124.6 C295.6 112.6 360.2 103.4 345.2 111.2 C313.6 121.4 302.0 115.0 332.2 114.6 C334.6 111.8 299.8 102.3 309.8 106.1"/><path d="M209.1 31.0 C220.2 32.3 210.6 39.5 182.5 34.6 C201.7 48.3 246.8 19.0 214.6 27.1 C192.0 49.1 228.9 22.9 197.9 39.0 C178.7 21.3 201.0 41.9 174.5 45.3"/><path d="M312.0 26.0 C273.4 12.8 317.9 49.3 303.3 31.2 C303.7 42.5 345.7 47.8 345.4 39.7 C313.9 37.7 321.6 28.3 317.4 27.6 C292.2 14.6 350.8 39.3 323.6 17.7"/><path d="M366.1 69.1 C363.1 80.8 312.8 80.3 326.7 81.8 C334.8 60.4 344.2 95.0 328.1 79.8 C347.2 75.7 275.0 63.8 299.4 78.5 C330.8 91.8 316.9 80.8 300.5 65.0"/><path d="M248.6 63.5 C287.2 76.9 238.2 81.7 257.6 63.6 C282.7 59.4 311.3 88.1 279.6 71.4 C300.8 67.2 314.9 60.0 297.1 78.9 C258.0 72.5 294.0 83.4 282.9 78.0"/><path d="M91.7 138.0 C104.5 141.0 109.3 128.6 106.6 133.4 C122.7 144.9 190.0 116.4 151.6 137.4 C132.2 133.1 126.0 130.7 162.0 144.1 C142.1 161.9 154.8 133.2 150.8 132.8"/><path d="M382.0 110.0 C406.8 91.4 402.8 125.3 395.0 113.9 C367.8 112.6 327.6 125.7 354.1 125.9 C389.7 122.4 366.2 117.9 364.1 113.6 C376.5 116.2 334.6 117.1 352.0 107.6"/><path d="M116.9 36.6 C89.5 47.8 85.2 66.3 94.0 48.8 C133.1 68.4 82.2 54.1 116.3 36.2 C154.2 31.7 111.9 59.2 110.0 40.0 C148.3 53.9 138.3 22.2 130.0 39.1"/><path d="M246.6 70.3 C248.8 53.8 215.3 65.2 219.9 57.8 C226.5 54.2 238.1 52.5 215.9 51.1 C234.6 39.6 229.8 81.1 260.7 63.8 C249.4 53.7 301.1 70.1 286.3 67.3"/><path d="M233.7 94.0 C213.6 115.1 289.8 102.0 256.5 85.3 C238.2 82.1 224.9 55.6 215.1 73.0 C182.0 80.8 222.9 66.8 218.8 61.1 C195.7 54.2 227.0 75.4 207.4 60.5"/><path d="M29.4 78.0 C50.9 65.4 51.1 70.9 57.2 81.5 C69.5 103.0 71.1 80.0 85.1 77.8 C79.3 72.1 75.0 106.1 107.2 89.6 C112.4 88.9 84.1 69.1 69.3 77.9"/><path d="M306.3 19.3 C272.9 10.7 298.5 32.4 280.5 23.9 C269.1 33.8 250.3 5.4 261.0 13.9 C294.5 33.2 312.9 13.1 279.8 15.8 C265.2 11.4 341.9 27.7 307.1 10.3"/><path d="M98.1 83.1 C89.7 78.2 61.6 82.1 86.0 79.3 C112.9 82.0 86.8 91.8 112.7 80.4 C74.5 81.1 150.5 77.3 147.0 74.3 C171.3 55.1 192.7 91.2 189.0 78.5"/><path d="M33.2 74.4 C-0.0 80.3 26.0 96.4 54.5 85.5 C32.2 97.2 69.7 90.1 67.9 78.4 C105.4 86.0 57.9 75.5 58.4 73.9 C91.6 69.9 104.4 87.0 78.3 79.7"/><path d="M337.1 119.9 C373.8 126.1 369.1 140.1 367.2 130.8 C360.8 115.3 413.7 150.2 394.4 128.6 C370.7 125.3 366.5 140.0 383.2 119.3 C352.4 125.8 365.6 99.9 343.5 114.0"/><path d="M24.6 103.7 C-12.5 86.5 7.0 102.7 32.2 115.2 C39.8 103.0 -16.8 111.6 8.4 121.3 C-6.7 123.4 25.4 127.6 0.0 128.5 C33.1 121.5 3.8 159.4 0.0 139.3"/><path d="M190.6 39.2 C214.7 34.1 152.3 52.4 150.1 51.7 C162.7 40.2 90.7 64.3 129.8 65.5 C146.9 70.1 90.8 58.7 118.3 73.8 C147.8 74.5 113.2 88.7 102.2 67.0"/><path d="M105.3 98.0 C65.4 112.1 101.5 119.7 73.8 105.6 C91.2 87.8 34.7 97.7 36.2 99.1 C64.8 90.5 100.4 97.9 77.2 101.5 C103.3 88.7 118.2 91.2 114.8 90.1"/><path d="M62.2 129.3 C28.3 120.7 42.6 133.4 45.3 124.0 C13.7 119.3 29.6 149.8 32.6 129.2 C-6.4 123.8 79.1 122.0 62.3 133.5 C23.1 155.2 92.0 119.4 68.1 132.4"/><path d="M243.3 48.2 C227.2 41.1 223.6 56.7 232.2 49.4 C250.7 41.9 245.9 43.7 210.3 41.0 C236.4 23.0 201.7 18.4 230.4 36.2 C204.8 31.9 273.4 46.2 246.4 42.1"/><path d="M35.6 84.8 C28.1 66.0 38.4 72.5 4.7 74.5 C26.1 88.7 -3.4 72.2 5.8 78.7 C-2.2 87.5 38.6 88.7 0.0 76.0 C-38.5 74.0 1.8 85.7 14.4 79.0"/></g>
<g font-family="Liberation Sans" fill="#0a0a0a" lengthAdjust="spacingAndGlyphs">
<text font-size="13.5" textLength="70" lengthAdjust="spacingAndGlyphs" transform="translate(142 13) rotate(-5.5)">resignation</text>
<text font-size="8.5" textLength="29" lengthAdjust="spacingAndGlyphs" transform="translate(200 13) rotate(22)">cheater</text>
<text font-size="19" textLength="54" lengthAdjust="spacingAndGlyphs" transform="translate(153 36) rotate(24)">Failure</text>
<text font-size="31" textLength="70" lengthAdjust="spacingAndGlyphs" transform="translate(234 64.4)">fraud</text>
<text font-size="32" textLength="165" lengthAdjust="spacingAndGlyphs" transform="translate(286 78) rotate(192)">deparment</text>
<text font-size="11" textLength="64" lengthAdjust="spacingAndGlyphs" transform="translate(220 61) rotate(180)">noitailimuh</text>
<text font-size="19" textLength="86" lengthAdjust="spacingAndGlyphs" transform="translate(91 94.6)">miscond</text>
<text font-size="19" textLength="28" lengthAdjust="spacingAndGlyphs" transform="translate(176 93) rotate(30)">uct</text>
<text font-size="23" textLength="70" lengthAdjust="spacingAndGlyphs" transform="translate(301 89) rotate(-14)">shame</text>
<text font-size="11" textLength="31" lengthAdjust="spacingAndGlyphs" transform="translate(38 86) rotate(-5)">guilty</text>
<text font-size="21" textLength="31" lengthAdjust="spacingAndGlyphs" transform="translate(19 111) rotate(-13)">Liar</text>
<text font-size="8.5" textLength="38" lengthAdjust="spacingAndGlyphs" transform="translate(36 144) rotate(-28)">DISGRACE</text>
<text font-size="6" textLength="30" lengthAdjust="spacingAndGlyphs" transform="translate(1 147)">humiliation</text>
<text font-size="8.5" textLength="40" lengthAdjust="spacingAndGlyphs" transform="translate(208 121) rotate(28)">depatment</text>
<text font-size="11.5" textLength="33" lengthAdjust="spacingAndGlyphs" transform="translate(352 118) rotate(-16)">failure</text>
<text font-size="10.5" textLength="52" lengthAdjust="spacingAndGlyphs" transform="translate(346.6 141.4) rotate(-12)">REJECTION</text>
</g>
</svg>
<!-- thumbnails -->
<svg width="0" height="0" style="position:absolute"><defs>
<symbol id="mic" viewBox="0 0 14 14"><rect x="4.6" y="0.8" width="4.8" height="7.6" rx="2.4" fill="#e8474e"/><path d="M3 6.2 C3 9.3 4.8 10.6 7 10.6 C9.2 10.6 11 9.3 11 6.2" stroke="#e8474e" stroke-width="1.2" fill="none"/><rect x="6.4" y="10.4" width="1.2" height="1.8" fill="#e8474e"/><rect x="4.3" y="12" width="5.4" height="1.2" fill="#e8474e"/><path d="M1 13.5 L13.2 0.8" stroke="#3b3b3b" stroke-width="2.2"/><path d="M1 13.5 L13.2 0.8" stroke="#e8474e" stroke-width="1"/></symbol>
</defs></svg>
<div class="a" style="left:1048px;top:123px;width:168px;height:98px;background:linear-gradient(180deg,#e4f094 0,#cfe97a 8%,#b6e25e 45%,#86d636 52%,#9cdc48 90%,#e4f094 100%)"></div>
<div class="a" style="left:1050px;top:125px;width:164px;height:94px;background:linear-gradient(180deg,#e8ef9c 0,#d8ea84 50%,#a2dc50 52%,#c8e67a 95%,#e8ef9c 100%)"></div>
<!-- 1 Dina -->
<div class="a" style="left:1052px;top:127px;width:160px;height:90px;overflow:hidden;background:linear-gradient(90deg,#cfc7a6 0,#e2d9b2 6%,#e6ddb6 30%,#e2d8b2 44%,#d4d0b4 52%,#b8bca8 62%,#a8b2aa 75%,#b4bcb6 86%,#c8c6b2 90%,#d0ccb8 100%)">
 <div class="a" style="left:90px;top:-5px;width:45px;height:50px;background:#7c9070;filter:blur(7px);opacity:.85"></div>
 <div class="a" style="left:92px;top:35px;width:45px;height:35px;background:#98aab4;filter:blur(6px)"></div>
 <div class="a" style="left:-8px;top:50px;width:62px;height:26px;background:#857e70;filter:blur(5px)"></div>
 <div class="a" style="left:10px;top:56px;width:14px;height:10px;background:#c8c0b0;filter:blur(3px)"></div>
 <div class="a" style="left:36px;top:68px;width:96px;height:36px;border-radius:45% 45% 0 0;background:#22305a;filter:blur(1.5px)"></div>
 <div class="a" style="left:42px;top:65px;width:11px;height:8px;border-radius:50%;background:#2848b8;filter:blur(1.2px)"></div>
 <div class="a" style="left:53px;top:17px;width:54px;height:60px;border-radius:48% 48% 30% 30%;background:radial-gradient(ellipse at 50% 40%,#5a3c30 0,#4a3228 60%,#3a2820 100%);filter:blur(1.5px)"></div>
 <div class="a" style="left:50px;top:50px;width:22px;height:26px;border-radius:30%;background:#4a3228;filter:blur(2px)"></div>
 <div class="a" style="left:90px;top:50px;width:22px;height:26px;border-radius:30%;background:#3a2a26;filter:blur(2px)"></div>
 <div class="a" style="left:60px;top:26px;width:33px;height:43px;border-radius:46% 46% 50% 50%;background:radial-gradient(ellipse at 45% 40%,#f0c8b8 0,#e2b4a2 55%,#c89484 100%);filter:blur(.7px)"></div>
 <div class="a" style="left:64px;top:45px;width:7px;height:2.5px;border-radius:50%;background:#8a6460;filter:blur(.7px)"></div>
 <div class="a" style="left:78px;top:45px;width:7px;height:2.5px;border-radius:50%;background:#8a6460;filter:blur(.7px)"></div>
 <div class="a" style="left:71px;top:61px;width:10px;height:3px;border-radius:50%;background:#b07068;filter:blur(.8px)"></div>
 <div class="a" style="left:93px;top:47px;width:7px;height:10px;border-radius:3px;background:#1a2038;filter:blur(.6px)"></div>
 <div class="lbl" style="width:121px;padding-left:3px;font-size:12.5px;letter-spacing:.2px">Dina Vyortkina, FSU</div>
</div>
<!-- 2 Sergiy -->
<div class="a" style="left:1052px;top:223px;width:160px;height:90px;overflow:hidden;background:linear-gradient(90deg,#3a2a24 0,#45322a 28%,#3a2c26 48%,#3a3430 62%,#2c2a28 68%,#5a5a58 71%,#3a3836 73%,#cfcfcb 76%,#d8d8d4 90%,#d4d4d0 100%)">
 <div class="a" style="left:0;top:0;width:52px;height:22px;background:linear-gradient(90deg,#5a5550,#8a847c 30%,#6a4a3a 45%,#7a7470 70%,#6a4030 90%);filter:blur(1.5px)"></div>
 <div class="a" style="left:15px;top:0;width:6px;height:24px;background:#7a3a2a;filter:blur(.5px)"></div>
 <div class="a" style="left:44px;top:0;width:14px;height:24px;background:#7a4234;filter:blur(1px)"></div>
 <div class="a" style="left:0;top:21px;width:54px;height:6px;background:#7a4232;border-radius:50% 50% 0 0;filter:blur(.5px)"></div>
 <div class="a" style="left:0;top:34px;width:52px;height:2px;background:#6a4234"></div>
 <div class="a" style="left:0;top:43px;width:52px;height:2px;background:#6a4234"></div>
 <div class="a" style="left:8px;top:50px;width:44px;height:4px;background:#8a6a58;filter:blur(.5px)"></div>
 <div class="a" style="left:10px;top:38px;width:10px;height:5px;background:#a09898;filter:blur(1px)"></div>
 <div class="a" style="left:52px;top:0;width:50px;height:9px;background:#c0b8b0;filter:blur(2.5px)"></div>
 <div class="a" style="left:117px;top:0;width:43px;height:11px;background:#4c4c44;filter:blur(.8px)"></div>
 <div class="a" style="left:50px;top:5px;width:52px;height:42px;border-radius:50% 50% 30% 30%;background:radial-gradient(ellipse at 50% 40%,#b0a694 0,#9a9080 70%,#7a7062 100%);filter:blur(1px)"></div>
 <div class="a" style="left:52px;top:20px;width:48px;height:54px;border-radius:38% 38% 46% 46%;background:radial-gradient(ellipse at 50% 35%,#e4c0b0 0,#d6ac9c 55%,#b88a7a 100%);filter:blur(.7px)"></div>
 <div class="a" style="left:62px;top:42px;width:9px;height:3px;border-radius:50%;background:#7a5a50;filter:blur(.6px)"></div>
 <div class="a" style="left:80px;top:42px;width:9px;height:3px;border-radius:50%;background:#7a5a50;filter:blur(.6px)"></div>
 <div class="a" style="left:70px;top:66px;width:12px;height:3px;border-radius:50%;background:#a06a60;filter:blur(.8px)"></div>
 <div class="a" style="left:56px;top:69px;width:54px;height:25px;background:#3a3630;filter:blur(.5px)"></div>
 <div class="lbl" style="width:110px;padding-left:22px;letter-spacing:.5px"><svg class="mic" width="14" height="14"><use href="#mic"/></svg>Сергій Шаров</div>
</div>
<!-- 3 Iurii -->
<div class="a" style="left:1052px;top:319px;width:160px;height:90px;overflow:hidden;background:#232323">
 <div class="a" style="left:46px;top:0;width:68px;height:90px;overflow:hidden;background:linear-gradient(175deg,#f6ead6 0,#e6d4b8 20%,#cdb496 38%,#9a8470 50%,#4a4038 62%,#3a342e 100%)">
  <div class="a" style="left:22px;top:26px;width:48px;height:66px;background:linear-gradient(90deg,#2e2a26,#4a463e 30%,#34302a 50%,#4e4a42 75%,#3a3630);transform:skewY(-14deg);transform-origin:0 100%;filter:blur(.4px)"></div>
  <div class="a" style="left:26px;top:38px;width:42px;height:2px;background:#a8a088;transform:skewY(-10deg);opacity:.8"></div>
  <div class="a" style="left:26px;top:48px;width:42px;height:2px;background:#a8a088;transform:skewY(-8deg);opacity:.8"></div>
  <div class="a" style="left:26px;top:58px;width:42px;height:2px;background:#a09880;transform:skewY(-5deg);opacity:.8"></div>
  <div class="a" style="left:26px;top:70px;width:42px;height:2px;background:#a09880;opacity:.8"></div>
  <div class="a" style="left:52px;top:50px;width:14px;height:6px;background:#5a8a50;filter:blur(1px)"></div>
  <div class="a" style="left:30px;top:42px;width:8px;height:20px;background:#d8d0c0;filter:blur(2px);opacity:.6"></div>
  <div class="a" style="left:0;top:58px;width:14px;height:32px;background:#262a36"></div>
  <div class="a" style="left:3px;top:37px;width:28px;height:36px;border-radius:50% 50% 45% 45%;background:radial-gradient(ellipse at 45% 30%,#f4e4e4 0,#dcc4c0 50%,#b89a94 100%);filter:blur(.5px)"></div>
  <div class="a" style="left:8px;top:66px;width:38px;height:26px;background:#262c3e;border-radius:30% 30% 0 0"></div>
  <div class="a" style="left:22px;top:55px;width:22px;height:24px;border-radius:40%;background:radial-gradient(ellipse at 50% 40%,#e8bcac,#c89282);filter:blur(.5px)"></div>
 </div>
 <div class="lbl" style="width:90px;padding-left:22px;letter-spacing:.35px"><svg class="mic" width="14" height="14"><use href="#mic"/></svg>Iurii Dziuba</div>
</div>
<!-- 4 Evgen -->
<div class="a" style="left:1052px;top:415px;width:160px;height:90px;overflow:hidden;background:linear-gradient(90deg,#080c1e 0,#0e1530 25%,#1e2a52 42%,#34447a 60%,#50669c 80%,#6a82b4 100%)">
 <div class="a" style="left:50px;top:-8px;width:120px;height:36px;background:#4e5e90;filter:blur(9px);opacity:.75"></div>
 <div class="a" style="left:54px;top:14px;width:72px;height:64px;border-radius:50% 50% 40% 40%;background:radial-gradient(ellipse at 50% 45%,#b8bcd0,#9aa2bc 60%,#6a7494);filter:blur(2.5px)"></div>
 <div class="a" style="left:57px;top:42px;width:62px;height:55px;border-radius:35%;background:radial-gradient(ellipse at 50% 40%,#bcb4c4,#a8a2b8 60%,#8a86a0);filter:blur(1.5px)"></div>
 <div class="a" style="left:62px;top:53px;width:20px;height:5px;background:#5a5a78;filter:blur(1.5px);transform:rotate(8deg)"></div>
 <div class="a" style="left:88px;top:55px;width:20px;height:5px;background:#5a5a78;filter:blur(1.5px);transform:rotate(-6deg)"></div>
 <div class="a" style="left:117px;top:55px;width:10px;height:16px;border-radius:50%;background:#b4aec2;filter:blur(1px)"></div>
 <div class="lbl" style="width:136px;padding-left:22px;letter-spacing:.55px"><svg class="mic" width="14" height="14"><use href="#mic"/></svg>Євген Лук'янчиков</div>
</div>
<!-- 5 Irina -->
<div class="a" style="left:1052px;top:511px;width:160px;height:90px;overflow:hidden;background:linear-gradient(90deg,#b8a8a4 0,#d8c8c0 4%,#eadcc8 12%,#e8d8c4 30%,#c8b0a8 36%,#8a6664 38%,#946c6c 60%,#a8848a 68%,#e0d4d0 70%,#d8ccc8 80%,#b4a4c4 83%,#a494c0 90%,#9484b8 100%)">
 <div class="a" style="left:0;top:0;width:160px;height:8px;background:#f0e8e8;filter:blur(3px);opacity:.7"></div>
 <div class="a" style="left:37px;top:2px;width:73px;height:14px;background:linear-gradient(90deg,#6a4a44,#5a4040 50%,#6a4a44);filter:blur(.8px)"></div>
 <div class="a" style="left:37px;top:16px;width:73px;height:2px;background:#b89090"></div>
 <div class="a" style="left:38px;top:20px;width:36px;height:64px;background:linear-gradient(180deg,#7a5050,#b07a80 35%,#c08c90 55%,#8a5e5e 80%,#7a5454);filter:blur(1.2px)"></div>
 <div class="a" style="left:39px;top:37px;width:30px;height:2px;background:#d8a8a8;opacity:.6"></div>
 <div class="a" style="left:39px;top:46px;width:30px;height:2px;background:#6a4040;opacity:.6"></div>
 <div class="a" style="left:16px;top:29px;width:9px;height:9px;background:#d0c8c4;border:1.5px solid #3a3030"></div>
 <div class="a" style="left:24px;top:37px;width:9px;height:9px;background:#d0c8c4;border:1.5px solid #3a3030"></div>
 <div class="a" style="left:115px;top:20px;width:6px;height:13px;border:1.5px solid #4a4040;background:#c8b8b0"></div>
 <div class="a" style="left:134px;top:0;width:3px;height:90px;background:#e0d0e8;opacity:.6;filter:blur(.5px)"></div>
 <div class="a" style="left:147px;top:0;width:3px;height:90px;background:#d8c8e4;opacity:.5;filter:blur(.5px)"></div>
 <div class="a" style="left:68px;top:21px;width:45px;height:60px;border-radius:50% 50% 35% 35%;background:radial-gradient(ellipse at 50% 35%,#a8a4c0,#8a88b0 70%,#6a6890);filter:blur(1px)"></div>
 <div class="a" style="left:72px;top:30px;width:32px;height:42px;border-radius:46%;background:radial-gradient(ellipse at 50% 40%,#9c9ad8,#8482c4 70%,#6a68a8);filter:blur(.5px)"></div>
 <div class="a" style="left:70px;top:38px;width:15px;height:9px;border:2px solid #1a1428;border-radius:3px"></div>
 <div class="a" style="left:86px;top:38px;width:15px;height:9px;border:2px solid #1a1428;border-radius:3px"></div>
 <div class="a" style="left:80px;top:58px;width:12px;height:3px;border-radius:50%;background:#4a4878;filter:blur(.6px)"></div>
 <div class="a" style="left:98px;top:74px;width:42px;height:20px;border-radius:40% 40% 0 0;background:#6c74c4;filter:blur(.5px)"></div>
 <div class="lbl" style="width:110px;padding-left:22px;letter-spacing:.45px"><svg class="mic" width="14" height="14"><use href="#mic"/></svg>Ірина&nbsp; Розман</div>
</div>
<!-- 6 Yuliia -->
<div class="a" style="left:1052px;top:607px;width:160px;height:90px;overflow:hidden;background:linear-gradient(90deg,#b8841a 0,#cc9830 8%,#dcae50 30%,#e8c270 50%,#eecf8c 75%,#f2d89c 100%)">
 <div class="a" style="left:0;top:0;width:160px;height:4px;background:#a08040;opacity:.5"></div>
 <div class="a" style="left:110px;top:55px;width:50px;height:35px;background:#f8e8c0;filter:blur(8px)"></div>
 <div class="a" style="left:8px;top:3px;width:72px;height:78px;border-radius:50% 50% 40% 40%;background:radial-gradient(ellipse at 50% 30%,#b03420,#9a2a18 60%,#7a2010);filter:blur(1.5px)"></div>
 <div class="a" style="left:26px;top:27px;width:42px;height:46px;border-radius:40% 40% 50% 50%;background:radial-gradient(ellipse at 50% 40%,#e8b4a0,#d49a86 60%,#b47868);filter:blur(.6px)"></div>
 <div class="a" style="left:33px;top:38px;width:8px;height:3px;border-radius:50%;background:#6a4040;filter:blur(.6px)"></div>
 <div class="a" style="left:53px;top:38px;width:8px;height:3px;border-radius:50%;background:#6a4040;filter:blur(.6px)"></div>
 <div class="a" style="left:43px;top:61px;width:11px;height:3px;border-radius:50%;background:#b06a60;filter:blur(.8px)"></div>
 <div class="a" style="left:-5px;top:64px;width:100px;height:40px;border-radius:40% 40% 0 0;background:#a84020;filter:blur(2px)"></div>
 <div class="a" style="left:32px;top:66px;width:30px;height:10px;background:#c88878;filter:blur(2px)"></div>
 <div class="lbl" style="width:122px;padding-left:22px;letter-spacing:.1px"><svg class="mic" width="14" height="14"><use href="#mic"/></svg>Yuliia Vyshnytska</div>
</div>
<!-- 7 volodimir -->
<div class="a" style="left:1052px;top:703px;width:160px;height:90px;overflow:hidden;background:linear-gradient(90deg,#969490 0,#a09e9a 40%,#a8a6a2 70%,#a4a29e 100%)">
 <div class="a" style="left:0;top:0;width:160px;height:30px;background:#acaaa6;filter:blur(10px);opacity:.5"></div>
 <div class="a" style="left:85px;top:15px;width:38px;height:24px;background:linear-gradient(90deg,#707070,#4a4a4a 40%,#606060 60%,#5a5a58);border:1.5px solid #c4c4c0;filter:blur(.3px)"></div>
 <div class="a" style="left:112px;top:27px;width:58px;height:50px;border-radius:50% 40% 0 40%;background:radial-gradient(ellipse at 40% 35%,#dcd6da,#bcb6bc 60%,#9c969e);filter:blur(1.2px)"></div>
 <div class="a" style="left:119px;top:32px;width:46px;height:62px;border-radius:45% 10% 0 40%;background:linear-gradient(180deg,#d8bcbc 0,#b89494 25%,#8a6468 50%,#6a4854 75%,#5a3a48 100%);filter:blur(1px)"></div>
 <div class="a" style="left:116px;top:54px;width:9px;height:16px;border-radius:50%;background:#9a7070;filter:blur(1px)"></div>
 <div class="a" style="left:124px;top:54px;width:40px;height:2.5px;background:#2a1a22;filter:blur(.3px)"></div>
 <div class="a" style="left:148px;top:50px;width:14px;height:16px;border-radius:50%;background:#5a58a8;filter:blur(1.2px)"></div>
 <div class="a" style="left:140px;top:68px;width:22px;height:14px;border-radius:50%;background:#6a48a0;filter:blur(2px);opacity:.7"></div>
 <div class="a" style="left:96px;top:82px;width:66px;height:12px;border-radius:60% 0 0 0;background:#2a2628"></div>
 <div class="lbl" style="width:81px;padding-left:22px;letter-spacing:.75px"><svg class="mic" width="14" height="14"><use href="#mic"/></svg>volodimir</div>
</div>
<!-- down arrow -->
<div class="a" style="left:1095px;top:799px;width:74px;height:34px;background:#111;border-radius:3px"></div>
<svg class="a" style="left:1125px;top:811px" width="14" height="9" viewBox="0 0 14 9"><path d="M1 1.5 L7 7.5 L13 1.5" stroke="#9a9aa2" stroke-width="1.6" fill="none"/></svg>
<!-- bottom toolbar -->
<svg class="a" style="left:46px;top:842px" width="26" height="26" viewBox="0 0 26 26">
 <rect x="9" y="2" width="8" height="13" rx="4" fill="#a8a8a8"/>
 <path d="M6 11 C6 16 8.5 18.5 13 18.5 C17.5 18.5 20 16 20 11" stroke="#a8a8a8" stroke-width="1.8" fill="none"/>
 <rect x="12" y="18.5" width="2" height="4" fill="#a8a8a8"/>
 <rect x="8.5" y="22" width="9" height="2" fill="#a8a8a8"/>
 <path d="M1.5 24.5 L24.5 1.5" stroke="#1a1a1a" stroke-width="3"/>
 <path d="M1.5 24.5 L24.5 1.5" stroke="#e04a4a" stroke-width="1.4"/>
</svg>
<svg class="a" style="left:93px;top:852px" width="9" height="6" viewBox="0 0 9 6"><path d="M1 5 L4.5 1.5 L8 5" stroke="#c8c8c8" stroke-width="1.4" fill="none"/></svg>
<div class="t" style="left:18px;top:872px;font-size:12px;color:#c9c9c9;letter-spacing:.2px">Включить звук</div>
<svg class="a" style="left:155px;top:847px" width="26" height="16" viewBox="0 0 26 16">
 <rect x="1" y="0.5" width="17" height="15" rx="3.5" fill="#b0b0b0"/>
 <path d="M18.5 5.5 L25 1 L25 15 L18.5 10.5 Z" fill="#b0b0b0"/>
</svg>
<svg class="a" style="left:210px;top:852px" width="9" height="6" viewBox="0 0 9 6"><path d="M1 5 L4.5 1.5 L8 5" stroke="#c8c8c8" stroke-width="1.4" fill="none"/></svg>
<div class="t" style="left:117px;top:872px;font-size:12px;color:#c9c9c9">Остановить видео</div>

<svg class="a" style="left:409px;top:846px" width="26" height="19" viewBox="0 0 26 19">
 <circle cx="19" cy="5" r="4" fill="#b0b0b0"/>
 <path d="M12 18 C12 12 15 10.5 19 10.5 C23 10.5 25.5 12 25.5 18 Z" fill="#b0b0b0"/>
 <circle cx="8" cy="5" r="4.8" fill="#b0b0b0" stroke="#1a1a1a" stroke-width="0.8"/>
 <path d="M0.5 18.5 C0.5 12.5 3.5 10.5 8 10.5 C12.5 10.5 15.5 12.5 15.5 18.5 Z" fill="#b0b0b0" stroke="#1a1a1a" stroke-width="0.8"/>
</svg>
<div class="t" style="left:438px;top:847px;font-size:12px;color:#c9c9c9">215</div>
<svg class="a" style="left:471px;top:852px" width="9" height="6" viewBox="0 0 9 6"><path d="M1 5 L4.5 1.5 L8 5" stroke="#c8c8c8" stroke-width="1.4" fill="none"/></svg>
<div class="t" style="left:393px;top:872px;font-size:12px;color:#c9c9c9">Участники</div>

<svg class="a" style="left:517px;top:845px" width="21" height="20" viewBox="0 0 21 20" fill="#b0b0b0">
 <rect x="1" y="10" width="4.5" height="9" rx="0.8"/><rect x="8" y="1" width="5" height="18" rx="0.8"/><rect x="15" y="5.5" width="4.5" height="13.5" rx="0.8"/>
</svg>
<div class="t" style="left:504px;top:872px;font-size:12px;color:#c9c9c9;letter-spacing:.3px">Опросы</div>

<svg class="a" style="left:596px;top:845px" width="22" height="20" viewBox="0 0 22 20" fill="#b0b0b0">
 <rect x="0.8" y="0.8" width="20.5" height="13" rx="4"/><path d="M5 12 L5.5 19 L11 13 Z"/>
</svg>
<div class="t" style="left:597px;top:872px;font-size:12px;color:#c9c9c9">Чат</div>

<div class="a" style="left:704px;top:846px;width:24px;height:18px;background:#22d05a;border-radius:2.5px"></div>
<svg class="a" style="left:710px;top:849px" width="12" height="12" viewBox="0 0 12 12"><path d="M6 10.5 L6 2.5 M2.5 5.5 L6 2 L9.5 5.5" stroke="#0e2a14" stroke-width="1.8" fill="none"/></svg>
<div class="t" style="left:655px;top:872px;font-size:12px;color:#3fd66a">Демонстрация экрана</div>

<svg class="a" style="left:815px;top:845px" width="22" height="21" viewBox="0 0 22 21">
 <circle cx="11" cy="10.5" r="9.3" stroke="#b8b8b8" stroke-width="1.6" fill="none"/><circle cx="11" cy="10.5" r="6.8" fill="#b0b0b0"/>
</svg>
<div class="t" style="left:806px;top:872px;font-size:12px;color:#c9c9c9">Запись</div>

<svg class="a" style="left:895px;top:845px" width="22" height="21" viewBox="0 0 22 21" stroke="#b4b4b4" stroke-width="1.6" fill="none">
 <circle cx="11" cy="10.5" r="9.2"/><ellipse cx="11" cy="10.5" rx="4" ry="9.2"/><path d="M2 7 H20 M2 14 H20 M11 1.3 V19.7"/>
</svg>
<div class="t" style="left:881px;top:872px;font-size:12px;color:#c9c9c9">Перевод</div>

<svg class="a" style="left:975px;top:842px" width="23" height="23" viewBox="0 0 23 23">
 <circle cx="10.5" cy="12.5" r="9.5" fill="#b0b0b0"/>
 <circle cx="7.3" cy="10.8" r="1.3" fill="#1a1a1a"/><circle cx="13.7" cy="10.8" r="1.3" fill="#1a1a1a"/>
 <path d="M6.5 14.2 C8 17 13 17 14.5 14.2" stroke="#1a1a1a" stroke-width="1.5" fill="none"/>
 <circle cx="18.5" cy="4.5" r="4.5" fill="#1a1a1a"/>
 <path d="M18.5 1 V8 M15 4.5 H22" stroke="#b8b8b8" stroke-width="1.5"/>
</svg>
<div class="t" style="left:963px;top:872px;font-size:12px;color:#c9c9c9">Реакции</div>

<div class="a" style="left:1184px;top:851px;width:62px;height:27px;background:#c4272b;border-radius:6px"></div>
<div class="t" style="left:1195px;top:858px;font-size:13px;font-weight:bold;color:#fff;letter-spacing:-.8px">Выйти</div>
</body></html>
